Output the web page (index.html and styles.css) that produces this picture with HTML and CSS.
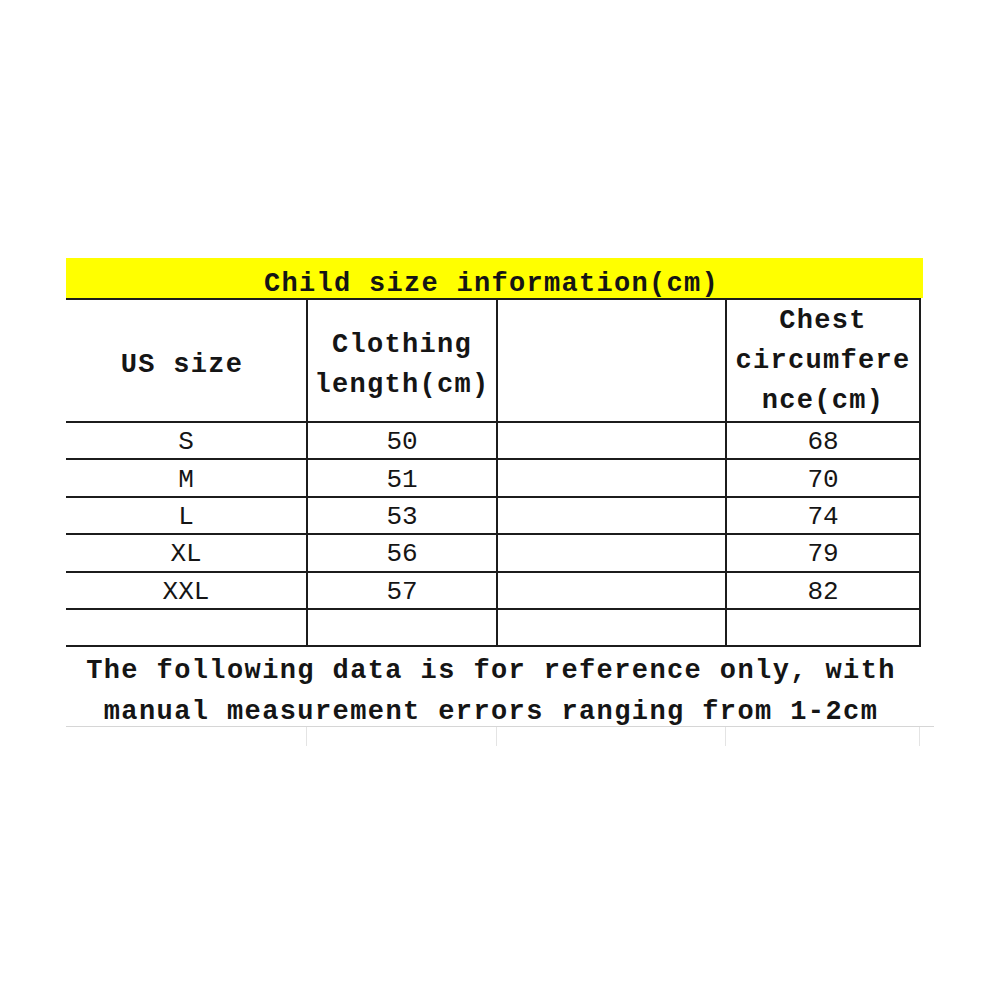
FILE: index.html
```html
<!DOCTYPE html>
<html>
<head>
<meta charset="utf-8">
<link rel="stylesheet" href="styles.css">
</head>
<body>
<div class="sheet">
  <div class="title">Child size information(cm)</div>
  <table class="sizes">
    <colgroup>
      <col class="c1"><col class="c2"><col class="c3"><col class="c4">
    </colgroup>
    <tr class="head">
      <td class="first nudge">US size</td>
      <td class="nudge">Clothing<br>length(cm)</td>
      <td></td>
      <td class="tall">Chest<br>circumfere<br>nce(cm)</td>
    </tr>
    <tr class="row"><td class="first">S</td><td>50</td><td></td><td>68</td></tr>
    <tr class="row"><td class="first">M</td><td>51</td><td></td><td>70</td></tr>
    <tr class="row"><td class="first">L</td><td>53</td><td></td><td>74</td></tr>
    <tr class="row"><td class="first">XL</td><td>56</td><td></td><td>79</td></tr>
    <tr class="row"><td class="first">XXL</td><td>57</td><td></td><td>82</td></tr>
    <tr class="row"><td class="first"></td><td></td><td></td><td></td></tr>
  </table>
  <div class="note">The following data is for reference only, with<br>manual measurement errors ranging from 1-2cm</div>
  <div class="stubs"><span></span><span></span><span></span><span></span></div>
</div>
</body>
</html>
```

FILE: styles.css
```css
html, body {
  margin: 0;
  padding: 0;
  background: #ffffff;
}
body {
  font-family: "Liberation Mono", "DejaVu Sans Mono", monospace;
  color: #151515;
}
.sheet {
  padding-top: 258px;
  padding-left: 66px;
  width: 857px;
}
.title {
  height: 40px;
  width: 857px;
  background: #ffff00;
  font-size: 27px;
  font-weight: bold;
  letter-spacing: 1.3px;
  line-height: 52px;
  text-align: center;
  box-sizing: border-box;
  padding-right: 6px;
}
.sizes {
  border-collapse: collapse;
  table-layout: fixed;
  width: 854px;
  margin-top: 0;
}
.c1 { width: 241px; }
.c2 { width: 190px; }
.c3 { width: 229px; }
.c4 { width: 194px; }
.sizes td {
  border: 2px solid #1c1c1c;
  padding: 0;
  text-align: center;
  vertical-align: middle;
}
.sizes td.first {
  border-left: none;
}
.head td {
  height: 121px;
  box-sizing: border-box;
  font-size: 27px;
  font-weight: bold;
  letter-spacing: 1.3px;
  line-height: 40px;
}
.head td.nudge {
  padding-top: 8px;
}
.head td.first {
  padding-right: 8px;
}
.head td.tall {
  padding-top: 1px;
}
.row td {
  height: 37.4px;
  font-size: 26px;
  line-height: 30px;
  padding-top: 3px;
  box-sizing: border-box;
}
.note {
  width: 868px;
  height: 80px;
  box-sizing: border-box;
  border-bottom: 1px solid #d6d6d6;
  font-size: 27px;
  font-weight: bold;
  letter-spacing: 1.4px;
  line-height: 41px;
  text-align: center;
  padding-top: 4px;
  padding-right: 18px;
}
.stubs {
  display: grid;
  grid-template-columns: 241px 190px 229px 194px;
  height: 19px;
}
.stubs span {
  border-right: 1px solid #e4e4e4;
}
```
